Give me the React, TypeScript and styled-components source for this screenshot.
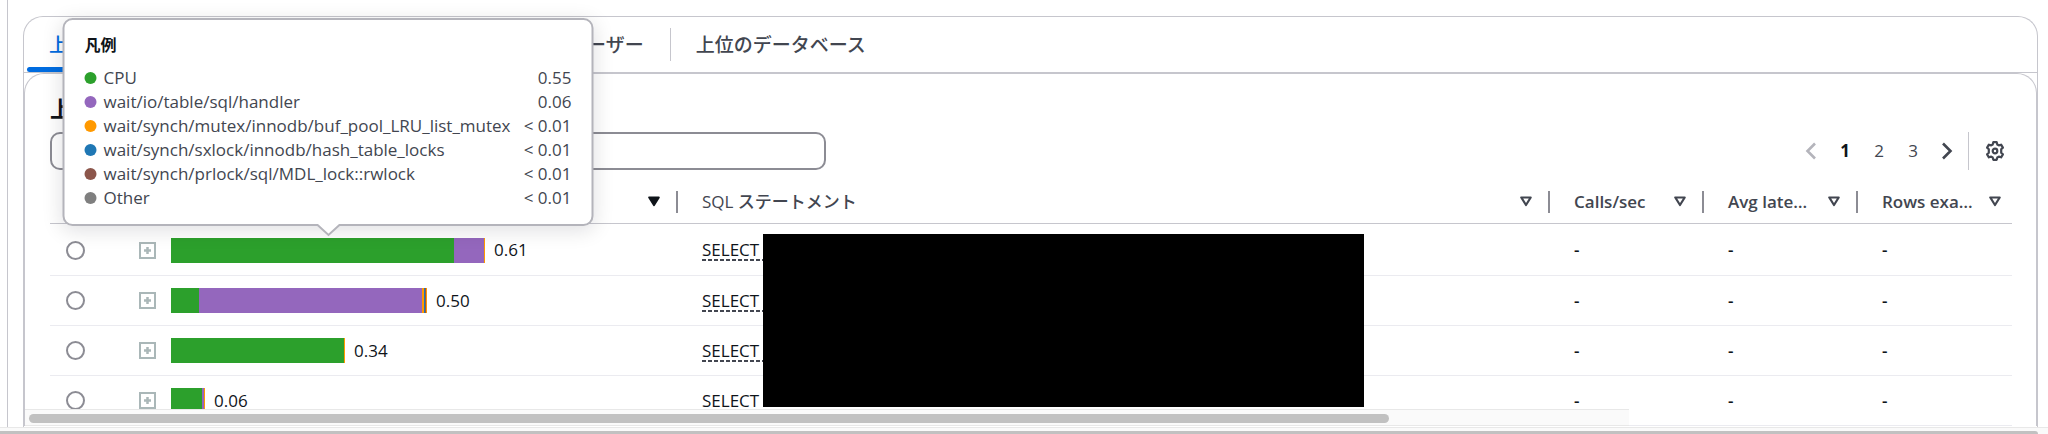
import React from 'react';
import styled, { createGlobalStyle, css } from 'styled-components';

const color = {
  text: '#0f141a',
  muted: '#424650',
  control: '#8c8c94',
  border: '#c6c6cd',
  tooltipBorder: '#b4b4bb',
  rowLine: '#ebebf0',
  link: '#006ce0',
  track: '#fafafa',
  trackLine: '#e8e8e8',
  thumb: '#c1c1c1',
};

const wait = {
  cpu: '#2ca02c',
  handler: '#9467bd',
  bufPool: '#ff9900',
  hashTable: '#1f77b4',
  mdlLock: '#8c564b',
  other: '#7f7f7f',
};

const GlobalStyle = createGlobalStyle`
  *, *::before, *::after { box-sizing: border-box; }
  body {
    margin: 0;
    background: #fff;
    color: ${color.text};
    font: 17px/24px "Open Sans", "Noto Sans CJK JP", sans-serif;
  }
  button { font: inherit; color: inherit; background: none; border: 0; padding: 0; cursor: pointer; }
`;

const Page = styled.div`
  display: flex;
  flex-direction: column;
  height: 100vh;
  overflow: hidden;
`;

const Content = styled.main`
  flex: 1;
  min-height: 0;
  margin-left: 7px;
  padding: 16px 10px 0 15px;
  border-left: 1px solid ${color.border};
  display: flex;
`;

const Card = styled.section`
  position: relative;
  flex: 1;
  min-width: 0;
  border: 1px solid ${color.border};
  border-bottom: 0;
  border-radius: 20px 20px 0 0;
`;

const TabList = styled.div`
  display: flex;
  align-items: center;
  height: 56px;
  border-bottom: 1px solid ${color.border};
`;

const Tab = styled.button<{ $active?: boolean }>`
  position: relative;
  height: 100%;
  padding: 0 26px;
  font-size: 19px;
  font-weight: 500;
  color: ${(p) => (p.$active ? color.link : color.muted)};
  white-space: nowrap;

  & + &::before {
    content: '';
    position: absolute;
    left: 0;
    top: 11px;
    height: 33px;
    border-left: 1px solid ${color.border};
  }

  ${(p) =>
    p.$active &&
    css`
      padding-left: 25px;

      &::after {
        content: '';
        position: absolute;
        left: 3px;
        right: 3px;
        bottom: 0;
        height: 5px;
        border-radius: 5px;
        background: ${color.link};
      }
    `}
`;

const Panel = styled.div`
  padding: 20px 24px 0 25px;
  border: 1px solid ${color.border};
  border-bottom: 0;
  border-radius: 20px 20px 0 0;
`;

const Heading = styled.h2`
  margin: 0 0 10px;
  font-size: 22px;
  line-height: 28px;
  font-weight: 700;
`;

const Toolbar = styled.div`
  display: flex;
  align-items: center;
  justify-content: space-between;
`;

const Search = styled.input`
  width: 776px;
  height: 38px;
  padding: 0 36px;
  border: 2px solid ${color.control};
  border-radius: 10px;
  font: inherit;
  outline: 0;
`;

const Tools = styled.div`
  display: flex;
  align-items: center;
  padding-right: 7px;
`;

const PageButton = styled.button<{ $current?: boolean }>`
  display: flex;
  align-items: center;
  justify-content: center;
  width: 34px;
  height: 38px;
  color: ${(p) => (p.$current ? color.text : color.muted)};
  font-weight: ${(p) => (p.$current ? 700 : 400)};

  &:disabled { color: ${color.tooltipBorder}; }
`;

const ToolDivider = styled.span`
  height: 38px;
  margin: 0 16px 0 4px;
  border-left: 1px solid ${color.border};
`;

const IconButton = styled.button`
  display: flex;
  color: ${color.muted};
`;

const Table = styled.table`
  width: 100%;
  margin-top: 10px;
  table-layout: fixed;
  border-collapse: separate;
  border-spacing: 0;
`;

const HeadCell = styled.th<{ $weight?: number }>`
  height: 44px;
  padding: 0;
  border-bottom: 1px solid ${color.border};
  color: ${color.muted};
  font-weight: ${(p) => p.$weight ?? 600};
  text-align: left;
`;

const HeadContent = styled.div`
  display: flex;
  align-items: center;
  padding-left: 24px;
`;

const HeadLabel = styled.span`
  flex: 1;
  white-space: nowrap;
`;

const SortButton = styled.button<{ $last?: boolean }>`
  display: flex;
  margin-right: ${(p) => (p.$last ? 11 : 16)}px;
`;

const ColumnDivider = styled.span`
  width: 2px;
  height: 22px;
  background: ${color.control};
`;

const Cell = styled.td`
  position: relative;
  height: 50px;
  padding: 0 0 0 24px;
  border-bottom: 1px solid ${color.rowLine};

  tr:first-child > & {
    height: 52px;
    border-top: 1px solid transparent;
  }
`;

const RadioCell = styled(Cell)`
  padding-left: 16px;
`;

const LoadCell = styled(Cell)`
  padding-left: 21px;
`;

const MetricCell = styled(Cell)`
  font-weight: 600;
`;

const Radio = styled.input`
  display: block;
  appearance: none;
  width: 19px;
  height: 19px;
  margin: 0;
  border: 2px solid ${color.control};
  border-radius: 50%;
`;

const Load = styled.div`
  display: flex;
  align-items: center;
`;

const ExpandButton = styled.button`
  display: flex;
  margin-right: 15px;
`;

const Bar = styled.div`
  position: relative;
  display: flex;
  height: 25px;
  margin-right: 9px;
`;

const Segment = styled.span<{ $fill: string }>`
  background: ${(p) => p.$fill};
`;

const Statement = styled.button`
  display: block;
  width: 120px;
  line-height: 22px;
  text-align: left;
  background: repeating-linear-gradient(90deg, ${color.muted} 0 4px, transparent 4px 6px) left bottom / 100% 2px no-repeat;
`;

const Mask = styled.div`
  position: absolute;
  z-index: 1;
  left: 85px;
  top: 9px;
  width: 601px;
  height: 173px;
  background: #000;
`;

const Tooltip = styled.div`
  position: absolute;
  z-index: 2;
  left: 50%;
  bottom: calc(100% + 12px);
  width: 531px;
  transform: translateX(-50%);
  padding: 13px 20px 14px;
  border: 2px solid ${color.tooltipBorder};
  border-radius: 10px;
  background: #fff;
  box-shadow: 0 4px 20px 1px rgba(0, 7, 22, 0.12);
  color: ${color.muted};
`;

const TooltipArrow = styled.svg`
  position: absolute;
  left: 50%;
  top: 100%;
  transform: translateX(-50%);
`;

const TooltipTitle = styled.h3`
  margin: 0 0 9px;
  font-size: 16px;
  line-height: 24px;
  font-weight: 700;
  color: ${color.text};
`;

const Legend = styled.ul`
  margin: 0;
  padding: 0;
  list-style: none;
`;

const LegendItem = styled.li`
  display: flex;
  align-items: center;
  white-space: nowrap;
`;

const Dot = styled.span<{ $fill: string }>`
  width: 12px;
  height: 12px;
  margin-right: 7px;
  border-radius: 50%;
  background: ${(p) => p.$fill};
`;

const LegendValue = styled.span`
  margin-left: auto;
`;

const StickyScrollbar = styled.div`
  position: absolute;
  left: 1px;
  bottom: 1px;
  width: calc(100% - 409px);
  height: 17px;
  padding: 4px 0 0 4px;
  border: solid ${color.trackLine};
  border-width: 1px 0;
  background: ${color.track};
`;

const StickyThumb = styled.div`
  width: 85%;
  height: 9px;
  border-radius: 5px;
  background: ${color.thumb};
`;

const PageScrollbar = styled.div`
  height: 7px;
  padding: 3px 10px 0 0;
  border-top: 1px solid ${color.trackLine};
  background: ${color.track};
`;

const PageThumb = styled.div`
  height: 3px;
  border-radius: 0 3px 0 0;
  background: ${color.thumb};
`;

const Chevron = ({ left }: { left?: boolean }) => (
  <svg width="12" height="18" viewBox="0 0 12 18" fill="none" stroke="currentColor" strokeWidth="2.6" aria-hidden="true">
    <path d={left ? 'M10 1.5 2.5 9l7.5 7.5' : 'M2 1.5 9.5 9 2 16.5'} />
  </svg>
);

const Gear = () => (
  <svg width="20" height="20" viewBox="0 0 20 20" fill="none" stroke="currentColor" strokeWidth="2.2" strokeLinejoin="round" aria-hidden="true">
    <path d="M8.3 1.2h3.4l.6 2.3 1.5.9 2.3-.7 1.8 2.9-1.7 1.7v3.4l1.7 1.7-1.8 2.9-2.3-.7-1.5.9-.6 2.3H8.3l-.6-2.3-1.5-.9-2.3.7-1.8-2.9 1.7-1.7V8.3L2.1 6.6l1.8-2.9 2.3.7 1.5-.9z" />
    <circle cx="10" cy="10" r="2.3" />
  </svg>
);

const SortIcon = ({ filled }: { filled?: boolean }) => (
  <svg width="12" height="11" viewBox="0 0 12 11" fill={filled ? color.text : 'none'} stroke={filled ? color.text : 'currentColor'} strokeWidth="2.2" strokeLinejoin="round" aria-hidden="true">
    <path d="M1.3 1.5h9.4L6 9z" />
  </svg>
);

const ExpandIcon = () => (
  <svg width="17" height="17" viewBox="0 0 17 17" fill="none" stroke="#aab7b8" strokeWidth="2" aria-hidden="true">
    <path d="M1 1h15v15H1z" />
    <path d="M8.5 5v7M5 8.5h7" strokeWidth="2.5" />
  </svg>
);

const tabs = ['上位の SQL', '上位の待機', '上位のホスト', '上位のユーザー', '上位のデータベース'];

const legend = [
  { name: 'CPU', value: '0.55', fill: wait.cpu },
  { name: 'wait/io/table/sql/handler', value: '0.06', fill: wait.handler },
  { name: 'wait/synch/mutex/innodb/buf_pool_LRU_list_mutex', value: '< 0.01', fill: wait.bufPool },
  { name: 'wait/synch/sxlock/innodb/hash_table_locks', value: '< 0.01', fill: wait.hashTable },
  { name: 'wait/synch/prlock/sql/MDL_lock::rwlock', value: '< 0.01', fill: wait.mdlLock },
  { name: 'Other', value: '< 0.01', fill: wait.other },
];

const rows: { load: string; segments: [string, number][] }[] = [
  { load: '0.61', segments: [[wait.cpu, 283], [wait.handler, 30], [wait.bufPool, 1]] },
  { load: '0.50', segments: [[wait.cpu, 28], [wait.handler, 223], [wait.bufPool, 2], [wait.hashTable, 1], [wait.mdlLock, 1], [wait.bufPool, 1]] },
  { load: '0.34', segments: [[wait.cpu, 173], [wait.bufPool, 1]] },
  { load: '0.06', segments: [[wait.cpu, 31], [wait.handler, 2], [wait.bufPool, 1]] },
];

const metrics = ['Calls/sec', 'Avg late…', 'Rows exa…'];

const LoadTooltip = () => (
  <Tooltip role="tooltip">
    <TooltipTitle>凡例</TooltipTitle>
    <Legend>
      {legend.map((item) => (
        <LegendItem key={item.name}>
          <Dot $fill={item.fill} />
          {item.name}
          <LegendValue>{item.value}</LegendValue>
        </LegendItem>
      ))}
    </Legend>
    <TooltipArrow width="26" height="13" viewBox="0 0 26 13" aria-hidden="true">
      <path d="M1 0 13 11 25 0" fill="#fff" stroke={color.tooltipBorder} strokeWidth="2" />
    </TooltipArrow>
  </Tooltip>
);

export default function App() {
  return (
    <Page>
      <GlobalStyle />
      <Content>
        <Card>
          <TabList role="tablist">
            {tabs.map((label, i) => (
              <Tab key={label} role="tab" aria-selected={i === 0} $active={i === 0}>
                {label}
              </Tab>
            ))}
          </TabList>
          <Panel>
            <Heading>上位の SQL</Heading>
            <Toolbar>
              <Search type="search" aria-label="SQL" />
              <Tools>
                <PageButton disabled aria-label="前へ"><Chevron left /></PageButton>
                {[1, 2, 3].map((n) => (
                  <PageButton key={n} $current={n === 1}>{n}</PageButton>
                ))}
                <PageButton aria-label="次へ"><Chevron /></PageButton>
                <ToolDivider />
                <IconButton aria-label="設定"><Gear /></IconButton>
              </Tools>
            </Toolbar>
            <Table>
              <colgroup>
                <col width="68" />
                <col width="560" />
                <col />
                {metrics.map((m) => <col key={m} width="154" />)}
              </colgroup>
              <thead>
                <tr>
                  <HeadCell />
                  <HeadCell>
                    <HeadContent>
                      <HeadLabel />
                      <SortButton aria-label="並べ替え"><SortIcon filled /></SortButton>
                      <ColumnDivider />
                    </HeadContent>
                  </HeadCell>
                  {['SQL ステートメント', ...metrics].map((label, i) => (
                    <HeadCell key={label} $weight={i === 0 ? 500 : 600}>
                      <HeadContent>
                        <HeadLabel>{label}</HeadLabel>
                        <SortButton aria-label={label} $last={i === metrics.length}><SortIcon /></SortButton>
                        {i < metrics.length && <ColumnDivider />}
                      </HeadContent>
                    </HeadCell>
                  ))}
                </tr>
              </thead>
              <tbody>
                {rows.map((row, i) => (
                  <tr key={row.load}>
                    <RadioCell><Radio type="radio" name="statement" aria-label={row.load} /></RadioCell>
                    <LoadCell>
                      <Load>
                        <ExpandButton aria-label="展開"><ExpandIcon /></ExpandButton>
                        <Bar>
                          {row.segments.map(([fill, width], s) => (
                            <Segment key={s} $fill={fill} style={{ width }} />
                          ))}
                          {i === 0 && <LoadTooltip />}
                        </Bar>
                        {row.load}
                      </Load>
                    </LoadCell>
                    <Cell>
                      <Statement>SELECT</Statement>
                      {i === 0 && <Mask />}
                    </Cell>
                    {metrics.map((m) => <MetricCell key={m}>-</MetricCell>)}
                  </tr>
                ))}
              </tbody>
            </Table>
          </Panel>
          <StickyScrollbar><StickyThumb /></StickyScrollbar>
        </Card>
      </Content>
      <PageScrollbar><PageThumb /></PageScrollbar>
    </Page>
  );
}
